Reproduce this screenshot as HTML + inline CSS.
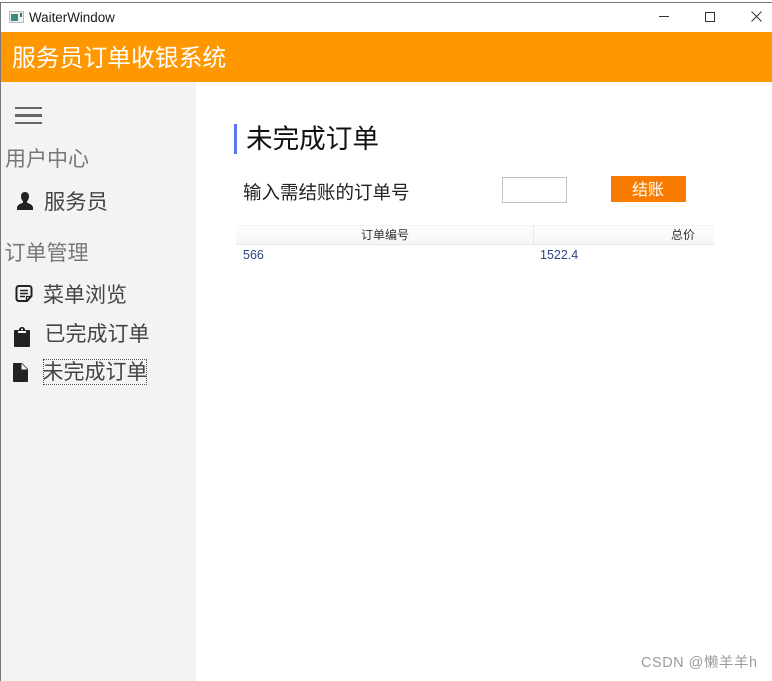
<!DOCTYPE html>
<html lang="zh">
<head>
<meta charset="utf-8">
<title>WaiterWindow</title>
<style>
html,body{margin:0;padding:0;background:#fff}
body{width:772px;height:681px;position:relative;overflow:hidden;font-family:"Liberation Sans","Noto Sans CJK SC",sans-serif}
.a{position:absolute;white-space:nowrap;line-height:1}
.b{position:absolute}
</style>
</head>
<body>
<div class="b" style="left:0;top:2px;width:1px;height:679px;background:#777"></div>
<div class="b" style="left:1px;top:2px;width:771px;height:1px;background:#777"></div>
<div class="b" style="left:1px;top:3px;width:771px;height:29px;background:#fff"></div>

<svg class="b" style="left:9px;top:10px" width="15" height="14" viewBox="0 0 15 14">
<rect x="0.5" y="1.5" width="14" height="11" fill="#eef1f1" stroke="#b5bcc0"/>
<rect x="2" y="4" width="7" height="7" fill="#3d8a7f"/>
<rect x="11" y="3" width="2" height="4" fill="#4a6a70"/>
</svg>
<div class="a" style="left:29px;top:11px;font-size:13.4px;color:#1a1a1a">WaiterWindow</div>

<div class="b" style="left:659px;top:16px;width:10px;height:1px;background:#333"></div>
<div class="b" style="left:705px;top:12px;width:8px;height:8px;border:1px solid #333"></div>
<svg class="b" style="left:751px;top:11px" width="11" height="11" viewBox="0 0 11 11"><path d="M0.5 0.5L10.5 10.5M10.5 0.5L0.5 10.5" stroke="#333" stroke-width="1" fill="none"/></svg>

<div class="b" style="left:1px;top:32px;width:771px;height:50px;background:#ff9700"></div>
<div class="a" style="left:12px;top:47px;font-size:23.8px;color:#fff">服务员订单收银系统</div>

<div class="b" style="left:1px;top:82px;width:195px;height:599px;background:#f3f3f5"></div>

<div class="b" style="left:15px;top:107px;width:27px;height:2.4px;background:#666"></div>
<div class="b" style="left:15px;top:114.3px;width:27px;height:2.4px;background:#666"></div>
<div class="b" style="left:15px;top:121.6px;width:27px;height:2.4px;background:#666"></div>

<div class="a" style="left:5px;top:149px;font-size:21px;color:#777">用户中心</div>
<svg class="b" style="left:16px;top:191px" width="18" height="20" viewBox="0 0 18 20"><path d="M9 1C6.2 1 5 3 5 5.5C5 7.6 6 9.4 7 10.2V11.6C5 12.6 1.6 13.4 1 16.4V19H17V16.4C16.4 13.4 13 12.6 11 11.6V10.2C12 9.4 13 7.6 13 5.5C13 3 11.8 1 9 1Z" fill="#222"/></svg>
<div class="a" style="left:44px;top:192px;font-size:21.3px;color:#444">服务员</div>

<div class="a" style="left:4.5px;top:243px;font-size:21px;color:#777">订单管理</div>

<svg class="b" style="left:15px;top:284px" width="18" height="19" viewBox="0 0 18 19"><path d="M4 2H14C15.5 2 16.5 3 16.5 4.5V12L12 17H4C2.5 17 1.5 16 1.5 14.5V4.5C1.5 3 2.5 2 4 2Z" fill="none" stroke="#222" stroke-width="2"/><path d="M5 6.5H13M5 9.5H13M5 12.5H10" stroke="#222" stroke-width="1.5" fill="none"/><path d="M11.5 16.5V12.5H16" stroke="#222" stroke-width="1.3" fill="none"/></svg>
<div class="a" style="left:43px;top:285px;font-size:21px;color:#444">菜单浏览</div>

<svg class="b" style="left:13px;top:326px" width="18" height="22" viewBox="0 0 18 22"><path d="M2 4H6C6 2 7.2 1 9 1C10.8 1 12 2 12 4H16C16.8 4 17 4.5 17 5V20C17 20.6 16.6 21 16 21H2C1.4 21 1 20.6 1 20V5C1 4.5 1.2 4 2 4Z" fill="#222"/><rect x="5" y="5" width="8" height="2" fill="#f3f3f5"/><circle cx="9" cy="3.5" r="1" fill="#f3f3f5"/></svg>
<div class="a" style="left:44.5px;top:324px;font-size:21px;color:#444">已完成订单</div>

<svg class="b" style="left:13px;top:362px" width="15" height="20" viewBox="0 0 15 20"><path d="M1 1H9L15 7V19C15 19.6 14.6 20 14 20H1C0.4 20 0 19.6 0 19V2C0 1.4 0.4 1 1 1Z" fill="#222"/><path d="M8.5 1.5V7.5H14.5" fill="#f3f3f5"/></svg>
<div class="b" style="left:43px;top:359px;width:102px;height:24px;border:1px dotted #555"></div>
<div class="a" style="left:42.5px;top:362px;font-size:21px;color:#444">未完成订单</div>

<div class="b" style="left:234px;top:124px;width:3px;height:30px;background:#5b78f0"></div>
<div class="a" style="left:246px;top:126px;font-size:26.6px;color:#111">未完成订单</div>

<div class="a" style="left:243px;top:184px;font-size:18.5px;color:#222">输入需结账的订单号</div>

<div class="b" style="left:502px;top:177px;width:63px;height:24px;border:1px solid #bfc1c6;background:#fff"></div>

<div class="b" style="left:611px;top:176px;width:75px;height:26px;background:#f97b00"></div>
<div class="a" style="left:632px;top:183px;font-size:16px;color:#fff">结账</div>

<div class="b" style="left:236px;top:225px;width:478px;height:20px;background:linear-gradient(#fdfdfd,#f6f6f7);border-top:1px solid #f3f3f3;border-bottom:1px solid #e8e8ea;box-sizing:border-box"></div>
<div class="b" style="left:533px;top:226px;width:1px;height:18px;background:#e6e6e8"></div>
<div class="a" style="left:361px;top:229px;font-size:12px;color:#333">订单编号</div>
<div class="a" style="left:671px;top:229px;font-size:12px;color:#333">总价</div>
<div class="a" style="left:243px;top:249px;font-size:12.5px;color:#2c4482">566</div>
<div class="a" style="left:540px;top:249px;font-size:12.5px;color:#2c4482">1522.4</div>

<div class="a" style="left:641px;top:656px;font-size:14.4px;letter-spacing:0.6px;color:#9a9a9a">CSDN @懒羊羊h</div>
</body>
</html>
